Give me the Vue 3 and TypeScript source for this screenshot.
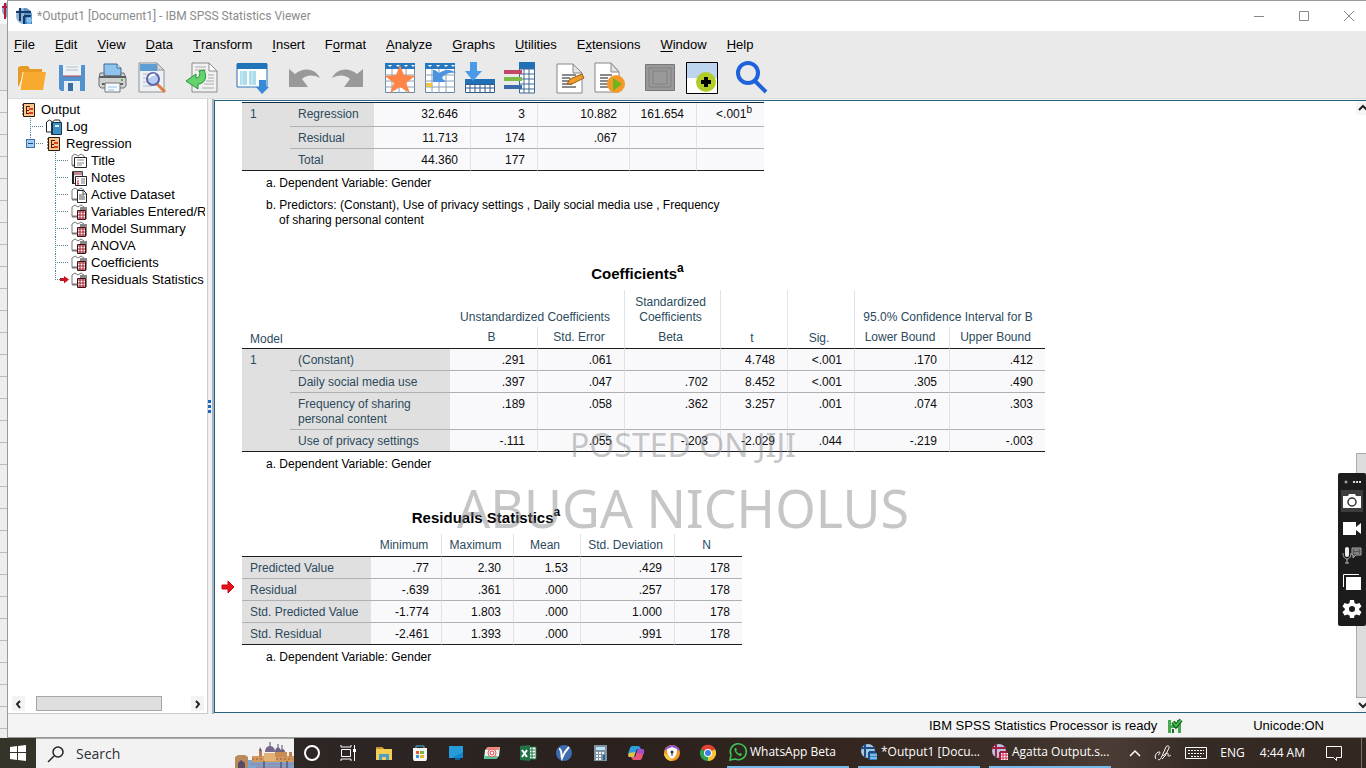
<script setup lang="ts">
interface MenuItem { pre: string; key: string; post: string }
interface TreeItem { label: string; level: number; icon: string; end?: boolean; current?: boolean; open?: boolean }
interface StatRow { label: string; cells: string[]; sup?: string }

const menus: MenuItem[] = [
  { pre: '', key: 'F', post: 'ile' },
  { pre: '', key: 'E', post: 'dit' },
  { pre: '', key: 'V', post: 'iew' },
  { pre: '', key: 'D', post: 'ata' },
  { pre: '', key: 'T', post: 'ransform' },
  { pre: '', key: 'I', post: 'nsert' },
  { pre: 'F', key: 'o', post: 'rmat' },
  { pre: '', key: 'A', post: 'nalyze' },
  { pre: '', key: 'G', post: 'raphs' },
  { pre: '', key: 'U', post: 'tilities' },
  { pre: 'E', key: 'x', post: 'tensions' },
  { pre: '', key: 'W', post: 'indow' },
  { pre: '', key: 'H', post: 'elp' },
]

const tree: TreeItem[] = [
  { label: 'Output', level: 0, icon: 'book' },
  { label: 'Log', level: 1, icon: 'log' },
  { label: 'Regression', level: 1, icon: 'book', end: true, open: true },
  { label: 'Title', level: 2, icon: 'title' },
  { label: 'Notes', level: 2, icon: 'notes' },
  { label: 'Active Dataset', level: 2, icon: 'page' },
  { label: 'Variables Entered/Removed', level: 2, icon: 'table' },
  { label: 'Model Summary', level: 2, icon: 'table' },
  { label: 'ANOVA', level: 2, icon: 'table' },
  { label: 'Coefficients', level: 2, icon: 'table' },
  { label: 'Residuals Statistics', level: 2, icon: 'table', end: true, current: true },
]

const anova: StatRow[] = [
  { label: 'Regression', cells: ['32.646', '3', '10.882', '161.654', '<.001'], sup: 'b' },
  { label: 'Residual', cells: ['11.713', '174', '.067', '', ''] },
  { label: 'Total', cells: ['44.360', '177', '', '', ''] },
]

const coefficients: StatRow[] = [
  { label: '(Constant)', cells: ['.291', '.061', '', '4.748', '<.001', '.170', '.412'] },
  { label: 'Daily social media use', cells: ['.397', '.047', '.702', '8.452', '<.001', '.305', '.490'] },
  { label: 'Frequency of sharing personal content', cells: ['.189', '.058', '.362', '3.257', '.001', '.074', '.303'] },
  { label: 'Use of privacy settings', cells: ['-.111', '.055', '-.203', '-2.029', '.044', '-.219', '-.003'] },
]

const residuals: StatRow[] = [
  { label: 'Predicted Value', cells: ['.77', '2.30', '1.53', '.429', '178'] },
  { label: 'Residual', cells: ['-.639', '.361', '.000', '.257', '178'] },
  { label: 'Std. Predicted Value', cells: ['-1.774', '1.803', '.000', '1.000', '178'] },
  { label: 'Std. Residual', cells: ['-2.461', '1.393', '.000', '.991', '178'] },
]
</script>

<template>
  <div class="screen">
    <div class="desktop">
      <div class="behind">
        <svg class="behind-icon" width="8" height="24" viewBox="0 0 8 24" aria-hidden="true">
          <circle cx="10" cy="10" r="8" fill="#8aa5c4" /><path d="M5 3v16M2 7h6" stroke="#b3193f" stroke-width="2" />
        </svg>
        <div class="behind-bar"></div>
        <div class="behind-grid"></div>
      </div>

      <main class="window">
        <header class="titlebar">
          <svg class="app-icon" width="18" height="18" viewBox="0 0 18 18" aria-hidden="true">
            <circle cx="9" cy="9" r="8" fill="#8fb2d4" />
            <path d="M9 1a8 8 0 0 1 8 8H9z" fill="#5d90c2" />
            <path d="M5 1v13M1 5h15M9 9v8M9 9h7" stroke="#14396b" stroke-width="2" fill="none" />
            <path d="M10 10h7v7h-7z" fill="#2e86c9" /><path d="M11 12h6M11 14h6M13 10v7M15 10v7" stroke="#a9d4f3" />
          </svg>
          <h1>*Output1 [Document1] - IBM SPSS Statistics Viewer</h1>
          <div class="window-buttons">
            <button type="button" aria-label="Minimize"><svg width="12" height="12" viewBox="0 0 12 12"><path d="M1 6.500h10" stroke="#888" /></svg></button>
            <button type="button" aria-label="Maximize"><svg width="12" height="12" viewBox="0 0 12 12"><path d="M1.500 1.500h9v9h-9z" stroke="#888" fill="none" /></svg></button>
            <button type="button" aria-label="Close"><svg width="12" height="12" viewBox="0 0 12 12"><path d="M1 1l10 10M11 1L1 11" stroke="#888" /></svg></button>
          </div>
        </header>

        <nav class="menubar">
          <button v-for="m in menus" :key="m.key + m.post" type="button">{{ m.pre }}<u>{{ m.key }}</u>{{ m.post }}</button>
        </nav>

        <div class="toolbar">
          <div class="group">
            <button type="button" aria-label="Open">
              <svg width="32" height="32" viewBox="0 0 32 32"><path d="M2 5l3-1h7l2 3h12v5H7L3 24H2z" fill="#e99a26" /><path d="M7 10h23l-3 18H4z" fill="#f8aa2e" /><path d="M7 10l-3 18" stroke="#fff2d8" fill="none" /></svg>
            </button>
            <button type="button" aria-label="Save">
              <svg width="32" height="32" viewBox="0 0 32 32"><path d="M3 3h26v26H5l-2-2z" fill="#5293cf" /><path d="M7 3h18v11H7z" fill="#eef3f8" /><path d="M10 5h12M10 8h12" stroke="#b5bec8" /><path d="M7 14h18" stroke="#c7434e" /><path d="M8 19h16v10H8z" fill="#e6eef5" /><path d="M12 21h5v8h-5z" fill="#3c6ea5" /></svg>
            </button>
            <button type="button" aria-label="Print">
              <svg width="32" height="32" viewBox="0 0 32 32"><path d="M8 2h13l4 4v8H8z" fill="#8ec4ee" stroke="#41698e" /><path d="M21 2v4h4" fill="#e2f1fc" stroke="#41698e" /><path d="M4 11h4v3h17v-3h3l2 5v8l-2 2H5l-2-2v-8z" fill="#d0d2d2" stroke="#6b6f70" /><path d="M3 15h27M6 22h21" stroke="#5b5f60" stroke-width="2" /><path d="M9 21h15v9H9z" fill="#f7fafc" stroke="#777" /><path d="M12 25h9M12 28h6" stroke="#8ec4ee" /><path d="M25 18h2" stroke="#56b33a" stroke-width="2" /></svg>
            </button>
            <button type="button" aria-label="Print preview">
              <svg width="32" height="32" viewBox="0 0 32 32"><path d="M3 1h18l7 7v22H3z" fill="#eef1f4" stroke="#8c9399" /><path d="M4 2h17v7H4z" fill="#5f9ed4" /><path d="M21 1v7h7z" fill="#d3d8dc" stroke="#8c9399" /><path d="M7 12h5M7 16h3M7 20h3M7 24h9" stroke="#b2bcc6" /><path d="M21 22l8 8" stroke="#e07b41" stroke-width="3" /><circle cx="17" cy="17" r="6" fill="#b8cdf2" stroke="#5a61a8" stroke-width="2" /><path d="M13 16c1-3 4-4 6-3" stroke="#fff" stroke-width="2" fill="none" /></svg>
            </button>
          </div>
          <div class="group">
            <button type="button" aria-label="Export">
              <svg width="32" height="32" viewBox="0 0 32 32"><path d="M6 1h17l8 8v21H6z" fill="#f1f1f1" stroke="#8b8b8b" /><path d="M23 1v8h8z" fill="#fff" stroke="#8b8b8b" /><path d="M9 5h11M9 8h11M22 13h6M22 16h6M20 19h8M18 22h10M16 26h12" stroke="#aaa" /><path d="M18 8c4 8 0 14-6 14v5L0 19l10-7v4c3 0 5-3 3-7z" fill="#65d36c" stroke="#27923a" /></svg>
            </button>
          </div>
          <div class="group">
            <button type="button" aria-label="Recall dialog">
              <svg width="32" height="32" viewBox="0 0 32 32"><path d="M1 2h30v23H1z" fill="#fff" stroke="#2471b8" /><path d="M1 1h30v6H1z" fill="#2173ba" /><path d="M4 9h7v14H4zM13 9h7v14h-7z" fill="#addcec" /><path d="M6 9v14M16 9v14" stroke="#d3edf5" /><path d="M23 18h7v7h3l-7 7-6-7h3z" fill="#3889d8" /></svg>
            </button>
          </div>
          <div class="group history">
            <button type="button" aria-label="Undo">
              <svg width="32" height="32" viewBox="0 0 32 32"><path d="M1 7l6 5C15 5 27 6 32 16 25 12 18 13 14 17l6 8H1z" fill="#999" /></svg>
            </button>
            <button type="button" aria-label="Redo">
              <svg width="32" height="32" viewBox="0 0 32 32"><path d="M31 7l-6 5C17 5 5 6 0 16c7-4 14-3 18 1l-6 8h19z" fill="#999" /></svg>
            </button>
          </div>
          <div class="group">
            <button type="button" aria-label="Go to data">
              <svg width="32" height="32" viewBox="0 0 32 32"><path d="M1.500 1.500h29v29h-29z" fill="#fff" stroke="#6b88a4" /><path d="M1 1h30v6H1z" fill="#2878bf" /><path d="M4 3h4l-2 2zM12 3h4l-2 2zM20 3h4l-2 2zM27 3h4l-2 2z" fill="#fff" /><path d="M8 7v24M15 7v24M22 7v24M1 13h30M1 19h30M1 25h30" stroke="#8ba0b4" /><path d="M16 3l4 10 11 1-9 7 4 10-10-6-10 6 4-10-9-7 11-1z" fill="#ff8445" /></svg>
            </button>
            <button type="button" aria-label="Go to case">
              <svg width="32" height="32" viewBox="0 0 32 32"><path d="M1.500 1.500h29v29h-29z" fill="#fff" stroke="#6b88a4" /><path d="M1 1h30v6H1z" fill="#2878bf" /><path d="M4 3h4l-2 2zM12 3h4l-2 2zM20 3h4l-2 2zM27 3h4l-2 2z" fill="#fff" /><path d="M8 7v24M15 7v24M22 7v24M1 13h30M1 19h30M1 25h30" stroke="#8ba0b4" /><path d="M2 21h6v4H2z" fill="#f0c544" /><path d="M9 8v12h13l-4-4c2-4 8-6 14-5-4-4-11-4-17 0l-4-3z" fill="#4c93e2" /></svg>
            </button>
            <button type="button" aria-label="Go to variable">
              <svg width="32" height="32" viewBox="0 0 32 32"><path d="M1 17h30v14H1z" fill="#fff" /><path d="M1 17h30v6H1z" fill="#2070b8" /><path d="M1.500 22.500h29v8h-29zM6 23v8M11 23v8M16 23v8M21 23v8M26 23v8M1 26h30" stroke="#315c85" fill="none" /><path d="M6 0h7v9h5l-9 10L1 9h5z" fill="#4b9aea" /></svg>
            </button>
            <button type="button" aria-label="Variables">
              <svg width="32" height="32" viewBox="0 0 32 32"><path d="M15 0h16v31H15z" fill="#fff" /><path d="M15 0h16v7H15z" fill="#2070b8" /><path d="M15.500 7h15v24h-15zM20 7v24M25 7v24M15 12h16M15 17h16M15 22h16M15 27h16" stroke="#3c6892" fill="none" /><path d="M0 8h18v4H0z" fill="#c34767" /><path d="M0 15h18v4H0z" fill="#7cbb48" /><path d="M0 23h18v4H0z" fill="#3a6ba8" /></svg>
            </button>
          </div>
          <div class="group">
            <button type="button" aria-label="Edit syntax">
              <svg width="32" height="32" viewBox="0 0 32 32"><path d="M3 2h16l9 9v20H3z" fill="#fff" stroke="#888" /><path d="M19 2v9h9z" fill="#e4e4e4" stroke="#888" /><path d="M8 13h14M8 16h8M8 19h12M8 22h10M8 25h14" stroke="#161616" /><path d="M13 22l3-5 12-5 2 4-12 6z" fill="#ef9c28" stroke="#9b5d14" /></svg>
            </button>
            <button type="button" aria-label="Run syntax">
              <svg width="32" height="32" viewBox="0 0 32 32"><path d="M1 1h16l8 9v20H1z" fill="#fff" stroke="#888" /><path d="M17 1v9h8z" fill="#e4e4e4" stroke="#888" /><path d="M6 13h12M6 16h8M6 19h8M6 22h8M6 25h8" stroke="#161616" /><circle cx="22" cy="22" r="9" fill="#f5992b" /><path d="M19 16l9 6-9 7z" fill="#70b41c" /></svg>
            </button>
          </div>
          <div class="group pair">
            <button type="button" aria-label="Designate window">
              <svg width="32" height="32" viewBox="0 0 32 32"><path d="M1.500 2.500h29v26h-29z" fill="#999" stroke="#777" /><path d="M5 6h22v19H5zM9 9h14v13H9z" fill="none" stroke="#808080" /></svg>
            </button>
            <button type="button" aria-label="Insert output">
              <svg width="32" height="32" viewBox="0 0 32 32"><path d="M.5.5h31v31H.5z" fill="#fff" stroke="#000" /><path d="M1 1h30v15H1z" fill="#bed5ef" /><circle cx="20" cy="20" r="10" fill="#b2cb27" /><path d="M20 15v10M15 20h10" stroke="#000" stroke-width="4" /></svg>
            </button>
          </div>
          <div class="group">
            <button type="button" aria-label="Find">
              <svg width="32" height="32" viewBox="0 0 32 32"><circle cx="12" cy="11" r="10" fill="none" stroke="#1f63db" stroke-width="4" /><path d="M19 19l11 11" stroke="#1f63db" stroke-width="4" /></svg>
            </button>
          </div>
        </div>

        <div class="body">
          <aside class="outline">
            <ul>
              <li v-for="item in tree" :key="item.label" :class="'level' + item.level">
                <svg v-if="item.level > 0" class="elbow" width="20" height="17" viewBox="0 0 20 17" aria-hidden="true">
                  <path :d="item.end ? 'M4.500 0V9' : 'M4.500 0V17'" stroke="#54809a" stroke-dasharray="1 1" />
                  <path d="M4 8.500H18" stroke="#54809a" stroke-dasharray="1 1" />
                  <g v-if="item.open"><rect x=".5" y="4.500" width="8" height="8" fill="#a8cdf2" stroke="#3572b0" /><path d="M2 8.500h5" stroke="#174a82" /></g>
                  <path v-if="item.current" d="M9 7h4V5l5 3.500-5 4V10H9z" fill="#c8141e" />
                </svg>
                <svg class="node" width="16" height="16" viewBox="0 0 16 16" aria-hidden="true">
                  <g v-if="item.icon === 'book'">
                    <path d="M2.500 1.500h11v13h-11z" fill="#f9c98b" stroke="#2a1a10" /><path d="M1 3h2M1 6h2M1 9h2M1 12h2" stroke="#2a1a10" />
                    <path d="M5.500 4v8M5 4.500h4M5 8.500h3M5 11.500h4" stroke="#5c140c" fill="none" /><path d="M8 7h4M8 11h4" stroke="#e23a1c" stroke-width="2" />
                  </g>
                  <g v-else-if="item.icon === 'log'">
                    <path d="M.5 3l3-2 3 2 2-2h5l1 3v9H.5z" fill="#fff" stroke="#222" /><path d="M5.500 3.500h10v12h-10z" fill="#3f8fc4" stroke="#17364c" /><path d="M9 6h4v2H9z" fill="#d8eefb" /><path d="M6 4v11" stroke="#17364c" stroke-width="2" />
                  </g>
                  <g v-else-if="item.icon === 'notes'">
                    <path d="M1.500 1.500h10v12h-10z" fill="#eee" stroke="#444" /><path d="M2 2h9v3H2z" fill="#bd8a8f" /><path d="M2 2v12" stroke="#222" stroke-width="2" /><path d="M4.500 6.500h11v9h-11z" fill="#fff" stroke="#222" /><path d="M7 8v1M7 10v4M6 14h2" stroke="#c2202a" /><path d="M10 9h4M10 11h4M10 13h4" stroke="#777" />
                  </g>
                  <g v-else>
                    <path d="M1 12.500V3l3-2 3 2 3-2 3 2v2" fill="#fff" stroke="#777" /><path d="M1 12.500h6" stroke="#777" stroke-width="2" />
                    <g v-if="item.icon === 'title'"><path d="M3.500 4.500h12v10h-12z" fill="#fff" stroke="#222" /><path d="M6 7h7M6 10h7M6 12h5" stroke="#888" /></g>
                    <g v-else-if="item.icon === 'page'"><path d="M6.500 3.500h6l3 3v9h-9z" fill="#fff" stroke="#222" /><path d="M12 4v3h3M8 8h5M8 10h6M8 12h6" stroke="#555" fill="none" /></g>
                    <g v-else><path d="M9 3h7v12H9z" fill="#888" /><path d="M6.500 6.500h8v9h-8z" fill="#fff" stroke="#3b1216" /><path d="M7 8h7M7 11h7M7 14h7M9 7v8M12 7v8" stroke="#a81c2b" /></g>
                  </g>
                </svg>
                <span>{{ item.label }}</span>
              </li>
            </ul>
            <div class="hscroll">
              <button type="button" aria-label="Scroll left"><svg width="13" height="14" viewBox="0 0 13 14"><path d="M8 4L5 7l3 4" stroke="#222" stroke-width="2" fill="none" /></svg></button>
              <div class="track"><div class="thumb"></div></div>
              <button type="button" aria-label="Scroll right"><svg width="13" height="14" viewBox="0 0 13 14"><path d="M5 4l3 3-3 4" stroke="#222" stroke-width="2" fill="none" /></svg></button>
            </div>
          </aside>

          <div class="splitter"><i></i><i></i><i></i></div>

          <section class="viewer">
            <div class="document">
              <table class="stat anova">
                <colgroup><col class="w48"><col class="w84"><col class="w97"><col class="w67"><col class="w92"><col class="w67"><col class="w67"></colgroup>
                <tbody>
                  <tr v-for="(row, r) in anova" :key="row.label">
                    <th v-if="r === 0" :rowspan="anova.length" class="model" scope="rowgroup">1</th>
                    <th scope="row">{{ row.label }}</th>
                    <td v-for="(c, i) in row.cells" :key="i">{{ c }}<sup v-if="row.sup && i === row.cells.length - 1">{{ row.sup }}</sup></td>
                  </tr>
                </tbody>
              </table>
              <p class="note">a. Dependent Variable: Gender</p>
              <p class="note second">b. Predictors: (Constant), Use of privacy settings , Daily social media use , Frequency<br>of sharing personal content</p>

              <table class="stat coef">
                <caption>Coefficients<sup>a</sup></caption>
                <colgroup><col class="w48"><col class="w160"><col class="w88"><col class="w87"><col class="w96"><col class="w67"><col class="w67"><col class="w95"><col class="w95"></colgroup>
                <thead>
                  <tr>
                    <th colspan="2" rowspan="2" class="left">Model</th>
                    <th colspan="2" class="line">Unstandardized Coefficients</th>
                    <th class="line">Standardized Coefficients</th>
                    <th rowspan="2" class="line">t</th>
                    <th rowspan="2" class="line">Sig.</th>
                    <th colspan="2">95.0% Confidence Interval for B</th>
                  </tr>
                  <tr>
                    <th class="line">B</th><th class="line">Std. Error</th><th class="line">Beta</th><th class="line">Lower Bound</th><th>Upper Bound</th>
                  </tr>
                </thead>
                <tbody>
                  <tr v-for="(row, r) in coefficients" :key="row.label">
                    <th v-if="r === 0" :rowspan="coefficients.length" class="model" scope="rowgroup">1</th>
                    <th scope="row">{{ row.label }}</th>
                    <td v-for="(c, i) in row.cells" :key="i">{{ c }}</td>
                  </tr>
                </tbody>
              </table>
              <p class="note">a. Dependent Variable: Gender</p>

              <div class="selected">
                <svg class="marker" width="14" height="14" viewBox="0 0 14 14" aria-hidden="true"><path d="M1 5h6V1l6 6-6 6V9H1z" fill="#e8101a" stroke="#c50b12" /></svg>
                <table class="stat resid">
                  <caption>Residuals Statistics<sup>a</sup></caption>
                  <colgroup><col class="w129"><col class="w71"><col class="w72"><col class="w67"><col class="w94"><col class="w67"></colgroup>
                  <thead>
                    <tr><td></td><th class="line">Minimum</th><th class="line">Maximum</th><th class="line">Mean</th><th class="line">Std. Deviation</th><th>N</th></tr>
                  </thead>
                  <tbody>
                    <tr v-for="row in residuals" :key="row.label">
                      <th scope="row">{{ row.label }}</th>
                      <td v-for="(c, i) in row.cells" :key="i">{{ c }}</td>
                    </tr>
                  </tbody>
                </table>
                <p class="note">a. Dependent Variable: Gender</p>
              </div>
            </div>
            <div class="vscroll">
              <button type="button" aria-label="Scroll up"><svg width="10" height="14" viewBox="0 0 10 14"><path d="M3 9l4-4 4 4" stroke="#222" stroke-width="2" fill="none" /></svg></button>
              <div class="vtrack"><div class="vthumb"></div></div>
              <button type="button" aria-label="Scroll down"><svg width="10" height="14" viewBox="0 0 10 14"><path d="M3 5l4 4 4-4" stroke="#222" stroke-width="2" fill="none" /></svg></button>
            </div>
          </section>
        </div>

        <footer class="status">
          <span>IBM SPSS Statistics Processor is ready</span>
          <svg width="16" height="16" viewBox="0 0 16 16" aria-hidden="true"><path d="M1 2h13v13H1z" fill="#47a852" /><path d="M4 2h6v5H4zM4 10h7v5H4z" fill="#e8f3e8" /><path d="M5 11h2v4H5z" fill="#24672c" /><path d="M6 4l3 4 5-6" stroke="#124c18" stroke-width="4" fill="none" /><path d="M6 4l3 4 5-6" stroke="#3fbf4c" stroke-width="2" fill="none" /></svg>
          <span class="unicode">Unicode:ON</span>
        </footer>
      </main>
    </div>

    <footer class="taskbar">
      <button type="button" class="start" aria-label="Start">
        <svg width="16" height="16" viewBox="0 0 16 16"><path d="M0 2l7-1v6H0zM8 1l8-1v7H8zM0 8h7v7l-7-1zM8 8h8v8l-8-1z" fill="#fff" /></svg>
      </button>
      <label class="search">
        <svg width="18" height="18" viewBox="0 0 18 18" aria-hidden="true"><circle cx="11" cy="7" r="5" fill="none" stroke="#222" stroke-width="1.500" /><path d="M7 11l-6 6" stroke="#222" stroke-width="1.500" /></svg>
        <input type="text" placeholder="Search" aria-label="Search">
        <svg width="60" height="28" viewBox="0 0 60 28" aria-hidden="true">
          <path d="M1 28V17l3-2h7l3 2v11z" fill="#b98a5c" /><path d="M4 28v-5l3-3 4 3v5z" fill="#5a4d63" />
          <path d="M14 20h46v8H14z" fill="#7aa7cf" /><path d="M16 24h44M22 27h34" stroke="#a8789a" stroke-width="1" />
          <path d="M18 16h42v6H18z" fill="#d59a5a" /><path d="M18 19h41" stroke="#8f5a4c" stroke-dasharray="2 2" />
          <path d="M30 13h12v8H30z" fill="#e4b277" /><path d="M31 12c0-8 10-8 10 0z" fill="#75668a" /><path d="M36 2v4M44 4v4M48 5v4" stroke="#554a66" />
          <path d="M41 12c0-6 6-6 6 0zM46 12c0-4 5-4 5 0z" fill="#6c6383" /><path d="M41 12h12v5H41z" fill="#c98c55" /><path d="M25 11h3v6h-3zM55 12h3v5h-3z" fill="#bd7e52" /><path d="M25 11l1-4 2 4z" fill="#5f546c" /><path d="M30 28v-7M47 28v-6M53 28v-7" stroke="#33405a" />
        </svg>
      </label>
      <div class="pins">
        <button type="button" aria-label="Cortana"><svg width="18" height="18" viewBox="0 0 18 18"><circle cx="9" cy="9" r="7" fill="none" stroke="#fff" stroke-width="2" /></svg></button>
        <button type="button" aria-label="Task view"><svg width="18" height="18" viewBox="0 0 18 18"><path d="M2 1v2h10V1M2 17v-2h10v2M2.500 5.500h9v7h-9zM15.500 1v16" stroke="#fff" fill="none" /><path d="M14 5h3v3h-3z" fill="#fff" /></svg></button>
        <button type="button" aria-label="File Explorer"><svg width="18" height="18" viewBox="0 0 18 18"><path d="M1 3h6l2 2h8v11H1z" fill="#f5cd55" /><path d="M1 3h6l2 2H1z" fill="#c8932a" /><path d="M4 10h10v6h-3v-3H7v3H4z" fill="#4a9fc8" /></svg></button>
        <button type="button" aria-label="Store"><svg width="18" height="18" viewBox="0 0 18 18"><path d="M5 5V2h8v3" stroke="#50b8dc" fill="none" stroke-width="1" /><path d="M2 4h14v11l-1 2H3l-1-2z" fill="#f6f6f6" /><path d="M5 7h3v3H5z" fill="#e85b32" /><path d="M9 7h4v3H9z" fill="#7db83a" /><path d="M5 11h3v3H5z" fill="#2c9ad8" /><path d="M9 11h4v3H9z" fill="#f0b429" /></svg></button>
        <button type="button" aria-label="Desktop"><svg width="18" height="18" viewBox="0 0 18 18"><path d="M2 2h14v12H2z" fill="#1684c8" /><path d="M2 2h14v6L5 14H2z" fill="#35b6ec" opacity=".5" /><path d="M8 14h5v2H8z" fill="#0c629c" /></svg></button>
        <button type="button" aria-label="Screen recorder"><svg width="18" height="18" viewBox="0 0 18 18"><path d="M5 3h12l-1 9-3 3H1l1-9z" fill="#e9f2ec" /><path d="M5 3h12l-1 3H3z" fill="#ef8a7d" /><path d="M1 15l1-3h13l-2 3z" fill="#50c79a" /><circle cx="9" cy="9" r="4" fill="#fff" stroke="#e25a53" stroke-width="1" /><circle cx="9" cy="9" r="2" fill="none" stroke="#e23a43" /></svg></button>
        <button type="button" aria-label="Excel"><svg width="18" height="18" viewBox="0 0 18 18"><path d="M9 3h8v12H9z" fill="#fff" stroke="#1e7445" /><path d="M10 6h6M10 9h6M10 12h6M13 3v12" stroke="#1e7445" /><path d="M1 2l10-1v16L1 16z" fill="#1e7445" /><path d="M3 6l5 7M8 6l-5 7" stroke="#fff" stroke-width="2" /></svg></button>
        <button type="button" aria-label="VPN"><svg width="18" height="18" viewBox="0 0 18 18"><circle cx="9" cy="9" r="8" fill="#3c6cae" /><path d="M4 5c3 0 2 5 3 9 2-5 4-8 7-11" stroke="#fff" stroke-width="2" fill="none" /></svg></button>
        <button type="button" aria-label="Calculator"><svg width="18" height="18" viewBox="0 0 18 18"><path d="M3 1h13v16H3z" fill="#7e929f" /><path d="M5 3h9v3H5z" fill="#bce2f5" /><path d="M5 9h9M5 12h6M5 15h6" stroke="#f1f5f7" stroke-width="2" stroke-dasharray="2 1" /><path d="M12 11h2v5h-2z" fill="#24659f" /></svg></button>
        <button type="button" aria-label="Copilot"><svg width="18" height="18" viewBox="0 0 18 18"><path d="M5 2h6c2 0 2 2 3 3h-3c-1 0-2 1-2 3l-2 5H3c-3 0-2-3-1-6 1-4 2-5 3-5z" fill="#2d9de0" /><path d="M2 9c-1 3-1 4 1 4h4l1-5z" fill="#e9c23b" /><path d="M13 16H7c-2 0-2-2-3-3h3c1 0 2-1 2-3l2-5h4c3 0 2 3 1 6-1 4-2 5-3 5z" fill="#e9567c" /><path d="M11 5h4c3 0 2 3 2 5l-7-1z" fill="#a44ecb" /></svg></button>
        <button type="button" aria-label="Security browser"><svg width="18" height="18" viewBox="0 0 18 18"><circle cx="9" cy="9" r="8" fill="#f29a25" /><path d="M2 6c2-6 12-7 15 1l-5-2z" fill="#8a52d8" /><path d="M1 9c0 4 3 8 8 8l-4-5z" fill="#f4cf44" /><path d="M9 3l5 2c0 5-1 8-5 10-4-2-5-5-5-10z" fill="#fff" /><circle cx="9" cy="8" r="1.500" fill="#333" /><path d="M9 8v4" stroke="#333" /></svg></button>
        <button type="button" aria-label="Chrome"><svg width="18" height="18" viewBox="0 0 18 18"><path d="M9 9L2 5a8 8 0 0 1 14 0z" fill="#e34133" /><path d="M9 9l7-4a8 8 0 0 1-7 12z" fill="#f8c72d" /><path d="M9 9v8A8 8 0 0 1 2 5z" fill="#2ea253" /><circle cx="9" cy="9" r="4" fill="#fff" /><circle cx="9" cy="9" r="3" fill="#3d7de4" /></svg></button>
      </div>
      <div class="tasks">
        <button type="button">
          <svg width="18" height="18" viewBox="0 0 18 18" aria-hidden="true"><path d="M1 17l1-5a8 8 0 1 1 4 4z" fill="none" stroke="#3ac658" stroke-width="1.500" /><path d="M6 5c-2 3 3 8 6 8l1-2-2-1-1 1-3-3 1-1-1-2z" fill="#3ac658" /></svg>
          <span>WhatsApp Beta</span>
        </button>
        <button type="button">
          <svg width="18" height="18" viewBox="0 0 18 18" aria-hidden="true"><circle cx="8" cy="8" r="7" fill="#a7c6e4" /><path d="M5 1v13M1 5h14M9 9v8M9 9h7" stroke="#1b4d87" stroke-width="2" fill="none" /><path d="M10 10h7v7h-7z" fill="#2e86c9" /><path d="M10 12h7M10 15h7" stroke="#d6ebfb" /></svg>
          <span>*Output1 [Docu...</span>
        </button>
        <button type="button">
          <svg width="18" height="18" viewBox="0 0 18 18" aria-hidden="true"><circle cx="8" cy="8" r="7" fill="#b8c4dc" /><path d="M5 1v13M1 5h14M9 9v8M9 9h7" stroke="#a61c43" stroke-width="2" fill="none" /><path d="M10 10h7v7h-7z" fill="#fff" /><path d="M10 12h7M10 15h7M12 10v7M15 10v7" stroke="#d42d51" /></svg>
          <span>Agatta Output.s...</span>
        </button>
      </div>
      <div class="tray">
        <button type="button" aria-label="Show hidden icons"><svg width="14" height="14" viewBox="0 0 14 14"><path d="M2 10l5-5 5 5" stroke="#fff" fill="none" stroke-width="1.500" /></svg></button>
        <button type="button" aria-label="Pen"><svg width="18" height="18" viewBox="0 0 18 18"><path d="M2 15c-2-2 0-7 3-7 2 0 1 2-1 3M4 15c1 2 3 0 4-3l4-9c1-2 4-1 3 1l-4 8-3 3M9 12c4-4 6-3 5-1 0 2 2 1 3 0" stroke="#fff" fill="none" /></svg></button>
        <button type="button" aria-label="Keyboard"><svg width="24" height="16" viewBox="0 0 24 16"><path d="M1.500 2.500h21v11h-21z" stroke="#fff" fill="none" /><path d="M4 5.500h16M4 8.500h16M7 11.500h10" stroke="#fff" stroke-dasharray="2 1" /></svg></button>
        <span class="lang">ENG</span>
        <span class="time">4:44 AM</span>
        <button type="button" aria-label="Notifications" class="bell"><svg width="18" height="18" viewBox="0 0 18 18"><path d="M1.500 2.500h15v11h-5v3l-3-3h-7z" stroke="#fff" fill="none" /></svg></button>
      </div>
    </footer>

    <div class="watermark"><span class="small">POSTED ON JIJI</span><span class="large">ABUGA NICHOLUS</span></div>

    <div class="recorder">
      <button type="button" class="dots" aria-label="Recorder options"><svg width="20" height="8" viewBox="0 0 20 8"><circle cx="4" cy="4" r="1" fill="none" stroke="#ccc" /><path d="M11 4h8" stroke="#ddd" stroke-width="2" stroke-dasharray="2 1" /></svg></button>
      <button type="button" class="on" aria-label="Take photo"><svg width="20" height="20" viewBox="0 0 20 20"><path d="M1 5h5l1-2h6l1 2h5v12H1z" fill="#fff" /><circle cx="10" cy="11" r="4" fill="none" stroke="#333" stroke-width="1.500" /></svg></button>
      <button type="button" aria-label="Record video"><svg width="20" height="20" viewBox="0 0 20 20"><path d="M1 4h13v5l5-4v11l-5-4v5H1z" fill="#fff" /></svg></button>
      <button type="button" aria-label="Microphone"><svg width="20" height="20" viewBox="0 0 20 20"><rect x="3" y="2" width="4" height="10" rx="2" fill="#eee" /><path d="M1 8c0 8 8 8 8 0M5 14v4M3 18h4" stroke="#bbb" fill="none" /><path d="M10 3h9v7h-5l-3 3v-3h-1z" fill="#555" stroke="#aaa" /><path d="M12 5h5M12 8h5" stroke="#aaa" /></svg></button>
      <button type="button" aria-label="Gallery"><svg width="20" height="20" viewBox="0 0 20 20"><path d="M1.500 15V2.500H17" stroke="#fff" fill="none" /><path d="M4 5h15v13H4z" fill="#fff" /></svg></button>
      <button type="button" aria-label="Settings"><svg width="20" height="20" viewBox="0 0 20 20"><path d="M8 1h4l.5 3 2 1 3-1 2 3.500-2.300 2v1.500l2.300 2-2 3.500-3-1-2 1-.5 2.500H8l-.5-2.500-2-1-3 1-2-3.500 2.300-2V9.500l-2.300-2 2-3.500 3 1 2-1z" fill="#fff" /><circle cx="10" cy="10" r="3" fill="#1c1c1c" /></svg></button>
    </div>
  </div>
</template>

<style>
body { margin: 0; }
</style>

<style scoped>
.screen { position: relative; display: flex; flex-direction: column; height: 100vh; overflow: hidden; background: #fff; color: #000; font: 13px/17px "Liberation Sans", Arial, sans-serif; }
.screen * { box-sizing: border-box; }
button { display: flex; align-items: center; justify-content: center; margin: 0; padding: 0; border: 0; background: none; color: inherit; font: inherit; }
svg { display: block; flex: none; overflow: visible; }
.desktop { display: flex; flex: 1; min-height: 0; }

.behind { display: flex; flex-direction: column; width: 8px; border-right: 1px solid #999; background: #e6e6e6; overflow: hidden; }
.behind-icon { overflow: hidden; background: #f8f8f8; }
.behind-bar { height: 67px; border-bottom: 1px solid #bbb; }
.behind-grid { flex: 1; background: repeating-linear-gradient(#ededed 0 21px, #bcbcbc 21px 22px); }

.window { display: flex; flex: 1; flex-direction: column; min-width: 0; border-top: 1px solid #999; background: #f4f4f4; }
.titlebar { display: flex; align-items: center; height: 30px; padding-left: 7px; gap: 4px; background: #fff; }
h1 { flex: 1; margin: 0; color: #8b8b8b; font: 12px/16px Roboto, "Open Sans", sans-serif; }
.window-buttons { display: flex; gap: 11px; }
.window-buttons button { width: 34px; height: 30px; }
.menubar { display: flex; align-items: center; gap: 20px; height: 27px; padding-left: 6px; background: #eaeaea; }
.menubar button { height: 20px; white-space: pre; }
.menubar u { text-underline-offset: 2px; }
.toolbar { display: flex; align-items: center; gap: 10px; height: 40px; padding-left: 4px; background: #eaeaea; }
.group { display: flex; }
.group button { width: 40px; height: 36px; }
.group.history button { width: 44px; }
.group.pair { gap: 2px; }

.body { display: flex; flex: 1; min-height: 0; border-top: 1px solid #ddd; }
.outline { display: flex; flex-direction: column; width: 200px; border-right: 1px solid #ccc; border-bottom: 1px solid #ccc; background: #fff; }
.outline ul { flex: 1; margin: 0 2px 0 0; padding: 2px 0 0; overflow: hidden; list-style: none; }
.outline li { display: flex; align-items: center; height: 17px; padding-left: 13px; white-space: nowrap; }
.outline li.level1 { padding-left: 18px; }
.outline li.level2 { padding-left: 43px; }
.outline li span { padding-left: 4px; }
.hscroll { display: flex; justify-content: space-between; height: 17px; padding: 0 3px 2px 4px; }
.hscroll button { width: 13px; background: #f3f3f3; }
.track { flex: 1; padding: 0 29px 0 11px; }
.thumb { height: 15px; border: 1px solid #a5a5a5; background: #dedede; }

.splitter { display: flex; flex-direction: column; align-items: center; justify-content: center; gap: 2px; width: 6px; padding-right: 2px; border-right: 2px solid #aab4bd; background: #f0f0f0; }
.splitter i { width: 3px; height: 3px; background: #1668c7; }

.viewer { display: flex; flex: 1; min-width: 0; margin: 1px 0; border: 1px solid #2a6180; border-right: 0; background: #fff; overflow: hidden; }
.document { flex: 1; min-width: 0; padding: 1px 0 0 27px; overflow: hidden; }
.vscroll { display: flex; flex-direction: column; width: 10px; }
.vscroll button { height: 14px; overflow: hidden; background: #f5f5f5; }
.vtrack { display: flex; flex: 1; flex-direction: column; justify-content: flex-end; }
.vthumb { height: 42%; border: 1px solid #aaa; border-right: 0; background: #dcdcdc; }

.stat { border-collapse: separate; border-spacing: 0; table-layout: fixed; color: #0c0c0c; font-size: 12px; line-height: 15px; }
.w48 { width: 48px; } .w67 { width: 67px; } .w71 { width: 71px; } .w72 { width: 72px; } .w84 { width: 84px; } .w87 { width: 87px; } .w88 { width: 88px; }
.w92 { width: 92px; } .w94 { width: 94px; } .w95 { width: 95px; } .w96 { width: 96px; } .w97 { width: 97px; } .w129 { width: 129px; } .w160 { width: 160px; }
.anova { width: 522px; border-top: 1px solid #14293d; }
.coef { width: 803px; }
.resid { width: 500px; }
caption { padding: 0 12px 8px 0; color: #000; font-size: 15px; font-weight: bold; line-height: 17px; }
caption sup { font-size: 12px; line-height: 1px; vertical-align: 7px; }
tbody tr { height: 22px; }
.anova tbody tr:first-child { height: 24px; }
th { font-weight: normal; color: #2c4a5c; }
tbody th { padding: 4px 20px 2px 8px; border-bottom: 1px solid #aeb0b2; background: #e0e0e0; text-align: left; vertical-align: top; }
.resid tbody th { padding-right: 0; }
tbody td { padding: 4px 12px 2px 0; border-right: 1px solid #e0e2e5; border-bottom: 1px solid #aeb0b2; background: #f9f9fb; text-align: right; vertical-align: top; }
tbody td:last-child { border-right: 0; }
tbody tr:last-child > *, th.model { border-bottom: 1px solid #1d1d1f; }
td sup { font-size: 10px; line-height: 1px; vertical-align: 5px; }
thead th { padding: 0 8px 2px 4px; vertical-align: bottom; }
thead th.line { border-right: 1px solid #e0e2e5; }
thead th.left { padding-left: 8px; text-align: left; }
.coef thead tr:first-child { height: 37px; }
.coef thead tr:last-child { height: 22px; }
.coef thead tr:last-child th { padding-bottom: 3px; }
.coef thead tr:last-child th, .coef thead th[rowspan], .resid thead th, .resid thead td { border-bottom: 1px solid #1d1d1f; }
.coef thead th.left { padding-bottom: 1px; }
.resid thead tr { height: 23px; }
.resid thead th { padding-bottom: 3px; }
.note { margin: 5px 0 0; padding-left: 37px; text-indent: -13px; font-size: 12px; line-height: 15px; }
.note.second { margin: 7px 0 37px; }
.selected { position: relative; margin-top: 37px; }
.marker { position: absolute; left: -21px; top: 71px; }

.status { display: flex; align-items: center; justify-content: flex-end; height: 24px; padding-right: 42px; gap: 10px; border-bottom: 1px solid #999; }
.unicode { padding-left: 60px; }

.taskbar { display: flex; height: 30px; background: linear-gradient(90deg, #35342a 0, #2d2725 20%, #2a211e 45%, #33251e 60%, #3b3029 75%, #4b3d35 81%, #352a24 88%, #322820); color: #fff; font: 12px/16px "Open Sans", "Noto Sans", sans-serif; }
.start { width: 36px; }
.search { display: flex; align-items: center; width: 258px; padding-left: 11px; border-top: 1px solid #aaa; background: #f2f2f2; }
.search input { flex: 1; min-width: 0; margin-left: 11px; padding: 0; border: 0; outline: 0; background: none; font: 14px/18px "Open Sans", "Noto Sans", sans-serif; }
.search input::placeholder { color: #2c3038; opacity: 1; }
.pins { display: flex; }
.pins button { width: 36px; }
.tasks { display: flex; gap: 9px; padding-left: 1px; }
.tasks button { justify-content: flex-start; gap: 3px; width: 122px; padding-left: 2px; border-bottom: 2px solid #76b9ed; white-space: nowrap; }
.tray { display: flex; flex: 1; align-items: center; justify-content: flex-end; gap: 12px; margin-right: 4px; padding-right: 18px; border-right: 1px solid #77706a; }
.bell { margin-left: 8px; }
.time { margin-left: 3px; white-space: nowrap; }

.watermark { position: absolute; inset: 0; display: flex; flex-direction: column; align-items: center; padding-top: 425px; color: rgba(125, 128, 132, .45); font-family: "Noto Sans", sans-serif; white-space: nowrap; pointer-events: none; }
.small { font-size: 32px; line-height: 40px; }
.large { padding-top: 8px; font-size: 52px; line-height: 70px; }

.recorder { position: absolute; top: 473px; right: 0; display: flex; flex-direction: column; align-items: center; gap: 5px; width: 28px; padding: 6px 0; border-radius: 2px; background: #1c1c1c; }
.recorder button { width: 22px; height: 22px; }
.recorder .dots { height: 6px; }
.recorder .on { background: #3d3d3d; }
</style>
